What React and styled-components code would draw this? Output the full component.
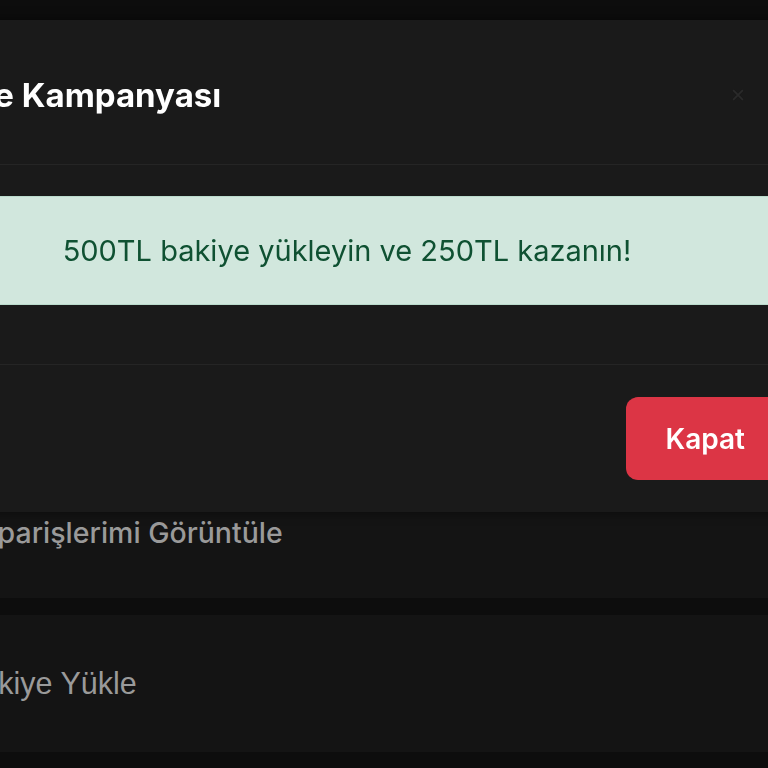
import styled, { createGlobalStyle } from 'styled-components';

const GlobalStyle = createGlobalStyle`
	html, body {
		margin: 0;
		padding: 0;
		background: #0d0d0d;
		overflow: hidden;
		font-family: 'Inter', 'Noto Sans', sans-serif;
	}
`;

const menuItems = [
	{ label: 'Hesap Bilgilerim' },
	{ label: 'Bakiye Geçmişi' },
	{ label: 'Siparişlerimi Görüntüle' },
	{ label: 'Bakiye Yükle', plain: true },
	{ label: 'Çıkış Yap' }
];

export default function App() {
	return (
		<>
			<GlobalStyle />
			<Page>
				<Menu>
					{menuItems.map(item => (
						<MenuCard key={item.label} $plain={item.plain}>
							<MenuLabel $plain={item.plain}>{item.label}</MenuLabel>
						</MenuCard>
					))}
				</Menu>
			</Page>

			<Backdrop>
				<Modal>
					<Header>
						<Title>Bakiye Kampanyası</Title>
						<CloseButton aria-label='Kapat'>
							<svg width='14' height='14' viewBox='0 0 16 16'>
								<path d='M3 3l10 10M13 3L3 13' stroke='currentColor' strokeWidth='2' strokeLinecap='round' />
							</svg>
						</CloseButton>
					</Header>
					<Body>
						<Alert>500TL bakiye yükleyin ve 250TL kazanın!</Alert>
					</Body>
					<Footer>
						<DangerButton>Kapat</DangerButton>
					</Footer>
				</Modal>
			</Backdrop>
		</>
	);
}

// the page behind the modal is wider than the window, only a slice shows
const Page = styled.div`
	margin-left: -120px;
	width: calc(100% + 240px);
	padding-top: 153px;
`;

const Menu = styled.div`
	display: flex;
	flex-direction: column;
	gap: 17px;
`;

const MenuCard = styled.div`
	height: 137px;
	display: flex;
	align-items: center;
	padding-left: ${p => (p.$plain ? '81px' : '92px')};
	padding-top: ${p => (p.$plain ? '0' : '5px')};
	box-sizing: border-box;
	background: #141414;
`;

const MenuLabel = styled.span`
	font-family: ${p => (p.$plain ? "'Liberation Sans', Arial, sans-serif" : "'Inter', sans-serif")};
	font-size: ${p => (p.$plain ? '30.5px' : '28.5px')};
	font-weight: ${p => (p.$plain ? 400 : 500)};
	color: #9a9a9a;
	white-space: nowrap;
`;

const Backdrop = styled.div`
	position: fixed;
	inset: 0;
`;

const Modal = styled.div`
	position: absolute;
	top: 20px;
	left: -110px;
	width: 920px;
	background: #1a1a1a;
	border-radius: 12px;
	box-shadow: 0 0 12px rgba(0, 0, 0, 0.5);
`;

const Header = styled.div`
	height: 145px;
	box-sizing: border-box;
	display: flex;
	align-items: center;
	justify-content: space-between;
	padding: 6px 30px 0 16px;
	border-bottom: 1px solid #252525;
`;

const Title = styled.h5`
	margin: 0;
	font-size: 33px;
	font-weight: 700;
	color: #ffffff;
	white-space: nowrap;
`;

const CloseButton = styled.button`
	width: 28px;
	height: 28px;
	margin-right: 28px;
	padding: 0;
	border: none;
	background: transparent;
	color: #2a2a2a;
	display: flex;
	align-items: center;
	justify-content: center;
`;

const Body = styled.div`
	padding: 31px 30px 59px;
`;

const Alert = styled.div`
	height: 109px;
	box-sizing: border-box;
	display: flex;
	align-items: center;
	justify-content: center;
	padding-right: 6px;
	background: #d1e7dd;
	border: 1px solid #badbcc;
	color: #0f5132;
	font-size: 29px;
	font-weight: 400;
	white-space: nowrap;
`;

const Footer = styled.div`
	height: 148px;
	box-sizing: border-box;
	display: flex;
	align-items: center;
	justify-content: flex-end;
	padding: 0 25px;
	border-top: 1px solid #252525;
`;

const DangerButton = styled.button`
	height: 83px;
	padding: 0 40px;
	border: none;
	border-radius: 12px;
	background: #dc3545;
	color: #ffffff;
	font-family: 'Inter', sans-serif;
	font-size: 28px;
	font-weight: 600;
`;
